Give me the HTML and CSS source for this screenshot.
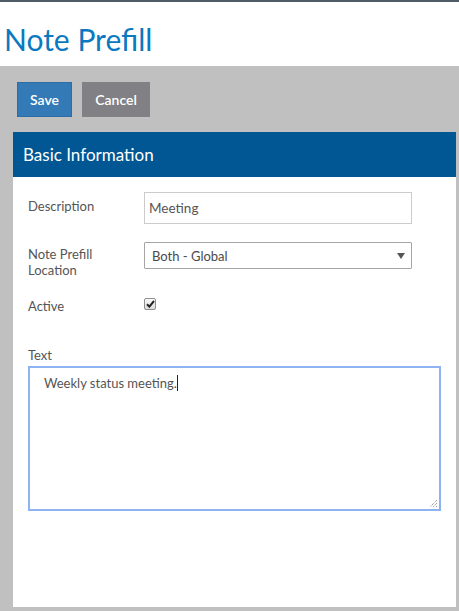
FILE: index.html
```html
<!DOCTYPE html>
<html>
<head>
<meta charset="utf-8">
<link rel="stylesheet" href="styles.css">
</head>
<body>
<div class="topbar"></div>
<h1 class="title">Note Prefill</h1>
<div class="stage">
  <div class="actions">
    <button class="btn btn-save">Save</button>
    <button class="btn btn-cancel">Cancel</button>
  </div>
  <div class="panel">
    <div class="panel-head">Basic Information</div>
    <div class="panel-body">
      <div class="row row-desc">
        <label class="lbl">Description</label>
        <input class="field" type="text" value="Meeting">
      </div>
      <div class="row row-loc">
        <label class="lbl">Note Prefill Location</label>
        <div class="select">
          <span class="select-text">Both - Global</span>
          <span class="select-arrow"></span>
        </div>
      </div>
      <div class="row row-active">
        <label class="lbl">Active</label>
        <span class="check">
          <svg width="9" height="8" viewBox="0 0 9 8"><path d="M1 4.2 L3.4 6.6 L8 1" fill="none" stroke="#222" stroke-width="2"/></svg>
        </span>
      </div>
      <div class="text-block">
        <label class="lbl lbl-text">Text</label>
        <div class="textarea">Weekly status meeting.<span class="caret"></span>
          <svg class="grip" width="9" height="9" viewBox="0 0 9 9"><path d="M8 1 L1 8 M8 4 L4 8 M8 7 L7 8" stroke="#777" stroke-width="1" stroke-dasharray="1 1"/></svg>
        </div>
      </div>
    </div>
  </div>
</div>
</body>
</html>
```
FILE: styles.css
```css
* { box-sizing: border-box; }
html, body { margin: 0; padding: 0; }
body {
  width: 459px;
  height: 611px;
  overflow: hidden;
  font-family: Lato, "Open Sans", sans-serif;
  color: #555;
  background: #fff;
  display: flex;
  flex-direction: column;
}
.topbar { height: 2px; background: #4d5c66; flex: none; }
.title {
  margin: 0;
  height: 64px;
  padding: 19px 0 0 4px;
  font-size: 30px;
  font-weight: 400;
  line-height: 36px;
  color: #0a79c0;
  flex: none;
}
.stage {
  flex: 1;
  background: #c0c0c0;
  padding: 16px 3px 4px 13px;
  display: flex;
  flex-direction: column;
}
.actions { display: flex; gap: 10px; padding-left: 4px; margin-bottom: 15px; }
.btn {
  font-family: Lato, sans-serif;
  font-size: 14px;
  font-weight: 600;
  height: 35px;
  border-radius: 0;
  color: #fff;
  padding: 0 12px;
  cursor: pointer;
}
.btn-save { background: #337ab7; border: 1px solid #2e6da4; width: 55px; }
.btn-cancel { background: #818185; border: 1px solid #818185; width: 68px; }
.panel {
  flex: 1;
  background: #fff;
  display: flex;
  flex-direction: column;
}
.panel-head {
  height: 45px;
  background: #005794;
  color: #fff;
  font-size: 17px;
  line-height: 45px;
  padding-left: 10px;
}
.panel-body { padding: 15px 0 0 15px; }
.row { display: flex; align-items: flex-start; }
.lbl { width: 116px; font-size: 13px; line-height: 16px; color: #555; flex: none; }
.row-desc .lbl { padding-top: 6px; }
.field {
  width: 268px;
  height: 32px;
  border: 1px solid #ccc;
  padding: 0 4px;
  font-family: Lato, sans-serif;
  font-size: 13.5px;
  color: #555;
  outline: none;
}
.row-loc { margin-top: 18px; }
.row-loc .lbl { padding-top: 4px; width: 100px; margin-right: 16px; }
.select {
  position: relative;
  width: 268px;
  height: 27px;
  border: 1px solid #a6a6a6;
  border-radius: 1px;
  display: flex;
  align-items: center;
  padding-left: 7px;
  font-size: 13px;
  color: #4a4a4a;
}
.select-arrow {
  position: absolute;
  right: 6px;
  top: 10px;
  width: 0;
  height: 0;
  border-left: 4px solid transparent;
  border-right: 4px solid transparent;
  border-top: 6px solid #555;
}
.row-active { margin-top: 19px; align-items: center; }
.row-active .lbl { padding-top: 1px; }
.check {
  width: 12px;
  height: 12px;
  border: 1px solid #8f8f8f;
  border-radius: 2px;
  background: linear-gradient(#fafafa, #dcdcdc);
  display: flex;
  align-items: center;
  justify-content: center;
  margin-top: -4px;
}
.text-block { margin-top: 33px; }
.lbl-text { display: block; margin-bottom: 3px; }
.textarea {
  position: relative;
  width: 413px;
  height: 145px;
  border: 2px solid #8db3f3;
  padding: 5px 14px;
  font-size: 13px;
  line-height: 20px;
  color: #555;
}
.caret { display: inline-block; width: 1px; height: 16px; background: #222; vertical-align: -3px; }
.grip { position: absolute; right: 1px; bottom: 1px; }
```
